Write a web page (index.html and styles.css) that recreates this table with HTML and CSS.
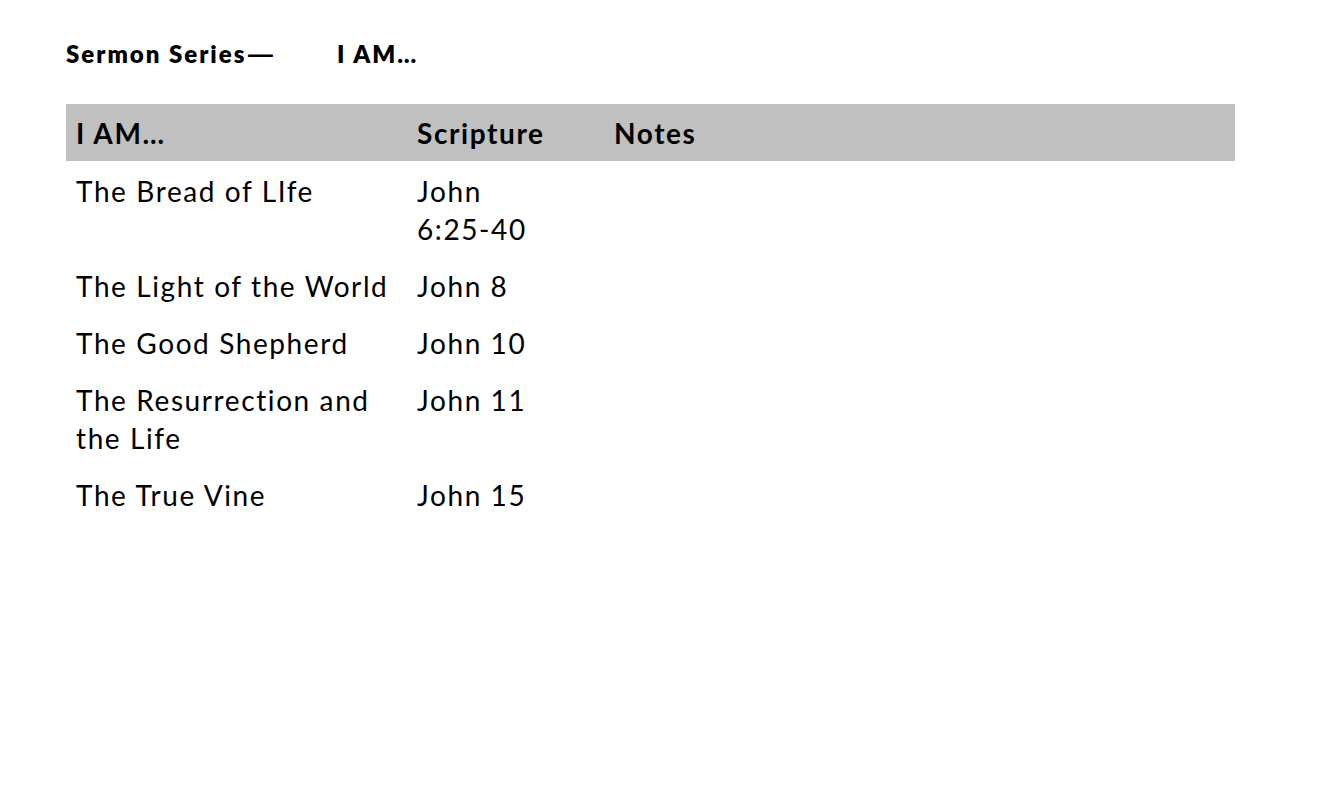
FILE: index.html
```html
<!DOCTYPE html>
<html>
<head>
<meta charset="utf-8">
<link rel="stylesheet" href="styles.css">
</head>
<body>
<div class="page">
  <h1 class="title"><span class="title-a">Sermon Series<span class="dash">—</span></span><span class="title-b">I AM…</span></h1>
  <table class="series">
    <colgroup>
      <col class="c1"><col class="c2"><col class="c3">
    </colgroup>
    <thead>
      <tr><th>I AM…</th><th>Scripture</th><th>Notes</th></tr>
    </thead>
    <tbody>
      <tr><td>The Bread of LIfe</td><td>John<br>6:25-40</td><td></td></tr>
      <tr><td>The Light of the World</td><td>John 8</td><td></td></tr>
      <tr><td>The Good Shepherd</td><td>John 10</td><td></td></tr>
      <tr><td>The Resurrection and the Life</td><td>John 11</td><td></td></tr>
      <tr><td>The True Vine</td><td>John 15</td><td></td></tr>
    </tbody>
  </table>
</div>
</body>
</html>
```
FILE: styles.css
```css
html, body {
  margin: 0;
  padding: 0;
  background: #ffffff;
}
.page {
  padding: 36px 0 0 66px;
  font-family: Lato, "Liberation Sans", sans-serif;
  color: #000;
}
.title {
  margin: 0;
  font-size: 24px;
  line-height: 36px;
  font-weight: 800;
  letter-spacing: 2px;
  display: flex;
}
.title-a {
  width: 271px;
}
.dash {
  display: inline-block;
  transform: scaleX(1.5);
  transform-origin: left center;
}
.series {
  margin-top: 32px;
  border-collapse: collapse;
  width: 1169px;
  table-layout: fixed;
}
.c1 { width: 341px; }
.c2 { width: 197px; }
.series th, .series td {
  text-align: left;
  vertical-align: top;
  padding: 10px 10px 9px 10px;
  font-size: 28px;
  line-height: 38px;
  letter-spacing: 1.6px;
}
.series th {
  font-weight: 700;
  background: #bfc0bf;
}
.series td {
  font-weight: 400;
  padding-top: 11px;
  padding-bottom: 8px;
}
```
